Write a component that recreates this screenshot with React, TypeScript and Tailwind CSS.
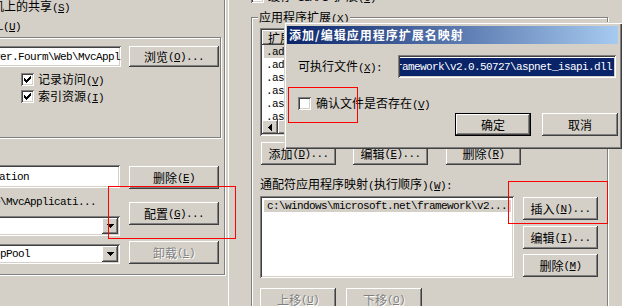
import React from "react";

const RAISED =
  "bg-[#d4d0c8] shadow-[inset_-1px_-1px_0_#404040,inset_1px_1px_0_#ffffff,inset_-2px_-2px_0_#808080,inset_2px_2px_0_#d4d0c8]";
const DEFBTN =
  "bg-[#d4d0c8] shadow-[inset_0_0_0_1px_#000000,inset_-2px_-2px_0_#404040,inset_2px_2px_0_#ffffff,inset_-3px_-3px_0_#808080]";
const SUNKEN =
  "bg-white shadow-[inset_1px_1px_0_#808080,inset_-1px_-1px_0_#ffffff,inset_2px_2px_0_#404040,inset_-2px_-2px_0_#d4d0c8]";
const ETCHED = "border border-[#808080] shadow-[inset_1px_1px_0_#ffffff,1px_1px_0_#ffffff]";

function M({ children, className = "" }: { children: React.ReactNode; className?: string }) {
  return (
    <span className={`[font-family:'Liberation_Mono',monospace] text-[11px] tracking-[-0.6px] whitespace-pre ${className}`}>
      {children}
    </span>
  );
}

function K({ k }: { k: string }) {
  return (
    <M>
      (<u>{k}</u>)
    </M>
  );
}

function Btn({
  className = "",
  children,
  disabled = false,
  def = false,
}: {
  className?: string;
  children: React.ReactNode;
  disabled?: boolean;
  def?: boolean;
}) {
  return (
    <div
      className={`flex items-center justify-center whitespace-nowrap shrink-0 ${def ? DEFBTN : RAISED} ${
        disabled ? "text-[#808080] [text-shadow:1px_1px_0_#ffffff]" : ""
      } ${className}`}
    >
      {children}
    </div>
  );
}

function Check({ checked = false }: { checked?: boolean }) {
  return (
    <div className={`w-[13px] h-[13px] shrink-0 flex items-center justify-center ${SUNKEN}`}>
      {checked && (
        <svg width="7" height="7" viewBox="0 0 7 7" shapeRendering="crispEdges">
          <path
            d="M0 2h1v3h-1z M1 3h1v3h-1z M2 4h1v3h-1z M3 3h1v3h-1z M4 2h1v3h-1z M5 1h1v3h-1z M6 0h1v3h-1z"
            fill="#000"
          />
        </svg>
      )}
    </div>
  );
}

function DownArrow() {
  return (
    <svg width="7" height="4" viewBox="0 0 7 4" shapeRendering="crispEdges">
      <path d="M0 0h7v1h-7z M1 1h5v1h-5z M2 2h3v1h-3z M3 3h1v1h-1z" fill="#000" />
    </svg>
  );
}

function Combo({ className = "", children }: { className?: string; children?: React.ReactNode }) {
  return (
    <div className={`h-[20px] flex items-center pl-[3px] pr-[2px] overflow-hidden ${SUNKEN} ${className}`}>
      <div className="flex-1 min-w-0 overflow-hidden whitespace-nowrap flex">{children}</div>
      <div className={`w-[16px] h-[16px] shrink-0 flex items-center justify-center ${RAISED}`}>
        <DownArrow />
      </div>
    </div>
  );
}

function LeftPanel() {
  return (
    <div className="w-[228px] shrink-0 h-full">
      <div className={`-ml-[4px] -mt-[4px] w-[229px] h-[279px] pl-[3px] pt-[3px] ${ETCHED}`}>
        <div className="h-[12px] whitespace-nowrap -ml-[68px]">
          另一台计算机上的共享
          <K k="S" />
        </div>
        <div className="h-[12px] mt-[7px] whitespace-nowrap -ml-[69px]">
          重定向到
          <M>{"\u00a0"}URL</M>
          <K k="U" />
        </div>

        <div className={`mt-[6px] -ml-[8px] w-[229px] h-[101px] pl-[7px] pt-[8px] ${ETCHED}`}>
          <div className="flex h-[21px]">
            <div className={`-ml-[10px] w-[131px] h-[21px] overflow-hidden flex items-center pl-[2px] ${SUNKEN}`}>
              <M className="shrink-0 -ml-[34px]">D:\Server.Fourm\Web\MvcApplication</M>
            </div>
            <Btn className="ml-[8px] w-[90px] h-[21px]">
              浏览
              <K k="O" />
              <M>...</M>
            </Btn>
          </div>
          <div className="flex items-center mt-[6px] ml-[21px] h-[13px]">
            <Check checked />
            <span className="ml-[4px] whitespace-nowrap">
              记录访问
              <K k="V" />
            </span>
          </div>
          <div className="flex items-center mt-[4px] ml-[21px] h-[13px]">
            <Check checked />
            <span className="ml-[4px] whitespace-nowrap">
              索引资源
              <K k="I" />
            </span>
          </div>
        </div>

        <div className="flex">
          <div className="-ml-[10px] w-[130px] mt-[27px] flex flex-col shrink-0">
            <div className={`h-[23px] overflow-hidden flex items-center pl-[2px] ${SUNKEN}`}>
              <M className="shrink-0 -ml-[47px]">MvcApplication</M>
            </div>
            <div className="mt-[6px] h-[12px] whitespace-nowrap -ml-[50px]">
              <M>&lt;</M>默认网站<M>&gt;\MvcApplicati...</M>
            </div>
            <Combo className="mt-[10px]" />
            <Combo className="mt-[8px]">
              <M className="shrink-0 -ml-[47px]">DefaultAppPool</M>
            </Combo>
          </div>
          <div className="ml-[9px] mt-[28px] flex flex-col w-[90px]">
            <Btn className="w-[90px] h-[23px]">
              删除
              <K k="E" />
            </Btn>
            <Btn className="mt-[13px] w-[90px] h-[23px]">
              配置
              <K k="G" />
              <M>...</M>
            </Btn>
            <Btn disabled className="mt-[16px] w-[90px] h-[23px]">
              卸载
              <K k="L" />
            </Btn>
          </div>
        </div>
      </div>
    </div>
  );
}

const ROWS = [".ad", ".adprototype", ".asa", ".asax", ".ascx", ".ashx", ".asmx"];

function RightPanel() {
  return (
    <div className="flex-1 min-w-0 h-full border-l border-white flex flex-col">
      <div className="-mt-[10px] ml-[22px] h-[13px] flex items-center whitespace-nowrap shrink-0">
        <Check />
        <span className="ml-[4px]">
          缓存<M>{"\u00a0"}ISAPI{"\u00a0"}</M>扩展
          <K k="C" />
        </span>
      </div>

      <div className={`relative mt-[14px] ml-[22px] w-[357px] h-[320px] shrink-0 pl-[8px] pt-[10px] ${ETCHED}`}>
        <span className="absolute left-[6px] -top-[7px] bg-[#d4d0c8] px-[1px] whitespace-nowrap">
          应用程序扩展
          <K k="X" />
        </span>

        {/* list view */}
        <div className={`w-[340px] h-[108px] p-[2px] flex flex-col overflow-hidden ${SUNKEN}`}>
          <div className="h-[15px] flex shrink-0">
            <div className={`w-[90px] pl-[6px] flex items-center whitespace-nowrap ${RAISED}`}>扩展名</div>
            <div className={`w-[180px] pl-[6px] flex items-center whitespace-nowrap ${RAISED}`}>可执行文件路径</div>
            <div className={`flex-1 pl-[6px] flex items-center whitespace-nowrap ${RAISED}`}>限制为</div>
          </div>
          <div className="flex-1 overflow-hidden">
            {ROWS.map((r, i) => (
              <div key={r} className="h-[13px] flex items-center">
                <div
                  className={`ml-[2px] w-[86px] h-[13px] pl-[2px] flex items-center overflow-hidden ${
                    i === 0 ? "bg-[#d4d0c8]" : ""
                  }`}
                >
                  <M>{r}</M>
                </div>
              </div>
            ))}
          </div>
          <div className="h-[14px] flex shrink-0 bg-[repeating-conic-gradient(#ffffff_0%_25%,#d4d0c8_0%_50%)] bg-[length:2px_2px]">
            <div className={`w-[16px] h-[14px] flex items-center justify-center ${RAISED}`}>
              <svg width="4" height="7" viewBox="0 0 4 7" shapeRendering="crispEdges">
                <path d="M3 0h1v7h-1z M2 1h1v5h-1z M1 2h1v3h-1z M0 3h1v1h-1z" fill="#000" />
              </svg>
            </div>
            <div className={`w-[120px] h-[14px] ${RAISED}`} />
          </div>
        </div>

        <div className="flex mt-[6px] h-[23px]">
          <Btn className="ml-[1px] w-[75px] h-[23px]">
            添加
            <K k="D" />
            <M>...</M>
          </Btn>
          <Btn className="ml-[17px] w-[75px] h-[23px]">
            编辑
            <K k="E" />
            <M>...</M>
          </Btn>
          <Btn className="ml-[18px] w-[75px] h-[23px]">
            删除
            <K k="R" />
          </Btn>
        </div>

        <div className="mt-[13px] h-[12px] whitespace-nowrap">
          通配符应用程序映射<M>(</M>执行顺序<M>)</M>
          <K k="W" />
          <M>:</M>
        </div>

        <div className="flex mt-[6px]">
          <div className={`w-[254px] h-[82px] pt-[4px] pl-[4px] pr-[3px] overflow-hidden shrink-0 ${SUNKEN}`}>
            <div className="h-[12px] bg-[#d4d0c8] pl-[3px] flex items-center whitespace-nowrap overflow-hidden">
              <M>c:\windows\microsoft.net\framework\v2...</M>
            </div>
          </div>
          <div className="ml-[9px] mt-[1px] flex flex-col">
            <Btn className="w-[75px] h-[23px]">
              插入
              <K k="N" />
              <M>...</M>
            </Btn>
            <Btn className="mt-[6px] w-[75px] h-[23px]">
              编辑
              <K k="I" />
              <M>...</M>
            </Btn>
            <Btn className="mt-[5px] w-[75px] h-[23px]">
              删除
              <K k="M" />
            </Btn>
          </div>
        </div>

        <div className="flex mt-[10px]">
          <Btn disabled className="w-[76px] h-[23px]">
            上移
            <K k="U" />
          </Btn>
          <Btn disabled className="ml-[10px] w-[76px] h-[23px]">
            下移
            <K k="O" />
          </Btn>
        </div>
      </div>
    </div>
  );
}

function Dialog() {
  return (
    <div className="absolute left-[284px] top-[22px] w-[338px] h-[127px] bg-[#d4d0c8] shadow-[inset_1px_1px_0_#d4d0c8,inset_2px_2px_0_#ffffff,inset_-1px_-1px_0_#404040,inset_-2px_-2px_0_#808080] pt-[4px] pl-[3px] pr-[4px] flex flex-col">
      <div className="h-[18px] shrink-0 bg-[linear-gradient(to_right,#0a246a,#a6caf0)] text-white font-bold tracking-[1px] pl-[2px] flex items-center whitespace-nowrap">
        添加/编辑应用程序扩展名映射
      </div>
      <div className="mt-[11px] ml-[11px] flex items-center h-[23px]">
        <span className="w-[100px] shrink-0 whitespace-nowrap">
          可执行文件
          <K k="X" />
          <M>:</M>
        </span>
        <div className={`w-[218px] h-[23px] shrink-0 px-[2px] pt-[3px] pb-[2px] overflow-hidden ${SUNKEN}`}>
          <div className="bg-[#0a246a] text-white flex items-center justify-end whitespace-nowrap w-full h-full overflow-hidden pr-[2px]">
            <M className="shrink-0">c:\windows\microsoft.net\framework\v2.0.50727\aspnet_isapi.dll</M>
          </div>
        </div>
      </div>
      <div className="mt-[19px] ml-[11px] flex items-center h-[13px]">
        <Check />
        <span className="ml-[5px] whitespace-nowrap">
          确认文件是否存在
          <K k="V" />
        </span>
      </div>
      <div className="mt-[3px] flex justify-end">
        <Btn def className="w-[76px] h-[23px]">
          确定
        </Btn>
        <Btn className="ml-[11px] w-[76px] h-[23px]">取消</Btn>
      </div>
    </div>
  );
}

export default function App() {
  return (
    <div className="relative w-[622px] h-[306px] overflow-hidden bg-[#d4d0c8] text-black text-[12px] leading-[12px] flex [font-family:'Noto_Sans_CJK_SC',sans-serif]">
      <LeftPanel />
      <RightPanel />
      <Dialog />
      <div className="absolute left-[108px] top-[186px] w-[128px] h-[53px] border border-[#ff0000]" />
      <div className="absolute left-[288px] top-[87px] w-[70px] h-[36px] border border-[#ff0000]" />
      <div className="absolute left-[508px] top-[181px] w-[100px] h-[43px] border border-[#ff0000]" />
    </div>
  );
}
